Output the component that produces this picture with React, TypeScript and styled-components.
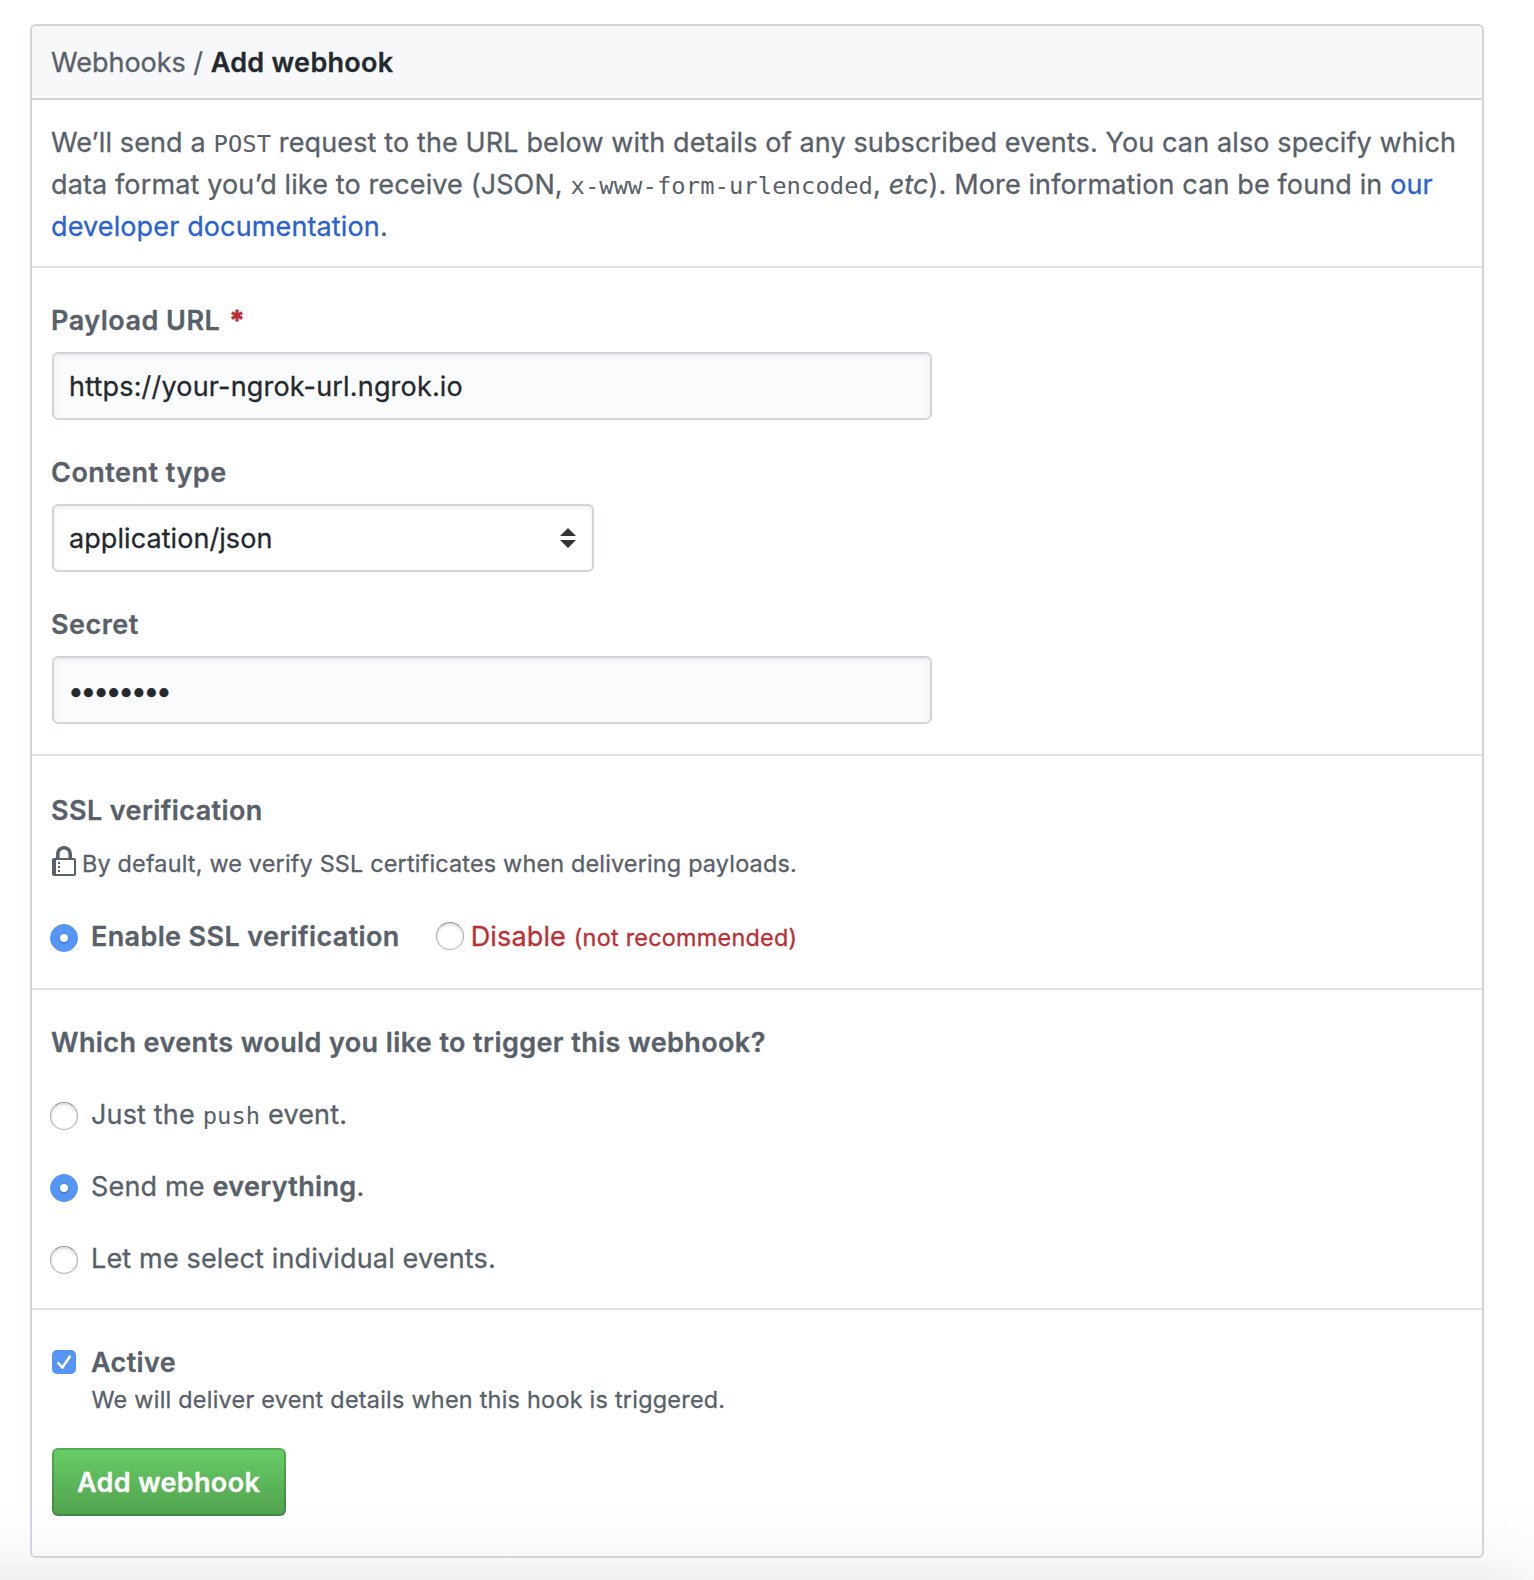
import React, { useState } from "react";
import styled, { createGlobalStyle, css } from "styled-components";

const color = {
  text: "#586069",
  dark: "#24292e",
  link: "#2a62d0",
  danger: "#bb2f34",
  border: "#d1d5da",
  divider: "#dfe2e5",
  accent: "#5596f5",
};

const GlobalStyle = createGlobalStyle`
  *, *::before, *::after { box-sizing: border-box; }
  body {
    margin: 0;
    background: #fff;
    color: ${color.text};
    font: 400 27px/42px Inter, "Liberation Sans", sans-serif;
    letter-spacing: 0.17px;
    -webkit-text-stroke: 0.3px currentColor;
  }
`;

const Page = styled.main`
  min-height: 1580px;
  padding: 24px 50px 22px 30px;
  background:
    linear-gradient(to left, rgba(255, 255, 255, 0.5), rgba(255, 255, 255, 0) 50px),
    linear-gradient(to top, rgba(0, 0, 0, 0.058), rgba(0, 0, 0, 0.026) 24px, rgba(0, 0, 0, 0.006) 58px, rgba(0, 0, 0, 0) 80px),
    #fff;
`;

const Panel = styled.form`
  border: 2px solid ${color.border};
  border-radius: 6px;
`;

const PanelHeader = styled.header`
  padding: 16px 20px 14px 19px;
  border-bottom: 2px solid ${color.border};
  border-radius: 4px 4px 0 0;
  background: #f6f8fa;
  letter-spacing: -0.02px;
`;

const PageTitle = styled.strong`
  color: ${color.dark};
  font-weight: 600;
  letter-spacing: 0.3px;
`;

const Section = styled.section<{ $top: number; $bottom: number }>`
  padding: ${(p) => p.$top}px 20px ${(p) => p.$bottom}px;

  & + & {
    border-top: 2px solid ${color.divider};
  }
`;

const Intro = styled.p`
  margin: 0 0 0 -1px;
  white-space: nowrap;
  letter-spacing: 0.125px;
`;

const Code = styled.code`
  font: 400 23.8px/0 "DejaVu Sans Mono", "Liberation Mono", monospace;
  letter-spacing: 0.08px;
  -webkit-text-stroke-width: 0;
`;

const Link = styled.a`
  color: ${color.link};
  text-decoration: none;
`;

const Fields = styled.div`
  display: grid;
  gap: 32px;
`;

const Field = styled.div`
  display: grid;
  gap: 10px;
`;

const Label = styled.label`
  margin-left: -1px;
  font-weight: 600;
  letter-spacing: 0.49px;
`;

const Required = styled.span`
  margin-left: 9.5px;
  color: ${color.danger};
  -webkit-text-stroke-width: 0.8px;
`;

const control = css`
  height: 68px;
  border: 2px solid ${color.border};
  border-radius: 6px;
  box-shadow: inset 0 2px 4px rgba(27, 31, 35, 0.075);
  color: ${color.dark};
  font: inherit;
`;

const Input = styled.input`
  ${control}
  width: 880px;
  padding: 1px 14px 0 15px;
  background: #fafbfc;
  outline: none;
  letter-spacing: 0.18px;

  &[type="password"] {
    padding-left: 14px;
    font-size: 28px;
    letter-spacing: -3.17px;
  }
`;

const Select = styled.div`
  ${control}
  display: flex;
  align-items: center;
  justify-content: space-between;
  width: 542px;
  padding: 1px 16px 0 15px;
  background: #fff;
  letter-spacing: 0.07px;

  svg {
    margin-top: -1px;
  }
`;

const Heading = styled.h2<{ $gap?: number }>`
  margin: 0 0 ${(p) => p.$gap ?? 0}px -1px;
  font-size: inherit;
  font-weight: 600;
  letter-spacing: 0.4px;
`;

const Small = styled.small`
  font-size: 23.4px;
  line-height: 0;
  letter-spacing: 0.25px;
`;

const SecureNote = styled.p`
  display: flex;
  gap: 6px;
  height: 36px;
  margin: 14px 0 34px;

  ${Small} {
    line-height: 36px;
    letter-spacing: 0.18px;
  }
`;

const Choices = styled.div<{ $row?: boolean }>`
  display: flex;
  flex-direction: ${(p) => (p.$row ? "row" : "column")};
  gap: ${(p) => (p.$row ? 38 : 30)}px;
`;

const Choice = styled.label<{ $bold?: boolean; $danger?: boolean; $gap?: number }>`
  display: flex;
  gap: ${(p) => p.$gap ?? 13}px;
  white-space: pre;
  color: ${(p) => (p.$danger ? color.danger : "inherit")};
  font-weight: ${(p) => (p.$bold ? 600 : 400)};
  letter-spacing: ${(p) => (p.$bold ? 0.36 : 0.16)}px;
`;

const Strong = styled.strong`
  font-weight: 600;
  letter-spacing: 0.33px;
`;

const Radio = styled.input.attrs({ type: "radio" })<{ $top?: number }>`
  appearance: none;
  flex: none;
  display: grid;
  place-items: center;
  width: 28px;
  height: 28px;
  margin: ${(p) => p.$top ?? 8}px 0 0 -2px;
  border: 1px solid;
  border-color: #979797 #acacac #b8b8b8;
  border-radius: 50%;
  background: #fff;
  box-shadow: inset 0 2px 3px rgba(0, 0, 0, 0.14);

  &:checked {
    border-color: ${color.accent};
    background: ${color.accent};
    box-shadow: none;
  }

  &:checked::before {
    content: "";
    width: 8px;
    height: 8px;
    border-radius: 50%;
    background: #fff;
    box-shadow: 0 1px 2px rgba(0, 40, 120, 0.45);
  }
`;

const CheckBox = styled.span`
  flex: none;
  width: 24px;
  height: 24px;
  margin-top: 8px;
  border-radius: 5px;
  background: ${color.accent};

  svg {
    display: block;
  }
`;

const HiddenInput = styled.input`
  appearance: none;
  width: 0;
  height: 0;
  margin: 0 -15px 0 0;
`;

const ActiveNote = styled.p`
  height: 32px;
  margin: 0 0 32px 39.5px;

  ${Small} {
    display: block;
    line-height: 32px;
  }
`;

const SubmitButton = styled.button`
  display: block;
  width: 234px;
  height: 68px;
  padding: 1px 1px 0 0;
  border: 2px solid rgba(27, 60, 35, 0.24);
  border-radius: 6px;
  background: linear-gradient(#68cd67, #50a14d) border-box;
  color: #fff;
  font: inherit;
  font-weight: 600;
  letter-spacing: 0.33px;
  white-space: nowrap;
`;

const LockIcon = () => (
  <svg width="24" height="32" viewBox="0 0 12 16" fill="currentColor" fillRule="evenodd">
    <path d="M4 13H3v-1h1v1zm8-6v7c0 .55-.45 1-1 1H1c-.55 0-1-.45-1-1V7c0-.55.45-1 1-1h1V4c0-2.2 1.8-4 4-4s4 1.8 4 4v2h1c.55 0 1 .45 1 1zM3.8 6h4.41V4c0-1.22-.98-2.2-2.2-2.2-1.22 0-2.2.98-2.2 2.2v2H3.8zM11 7H2v7h9V7zM4 8H3v1h1V8zm0 2H3v1h1v-1z" />
  </svg>
);

const SortIcon = () => (
  <svg width="16" height="20" viewBox="0 0 16 20" fill="#333">
    <path d="M8 0l8 8H0zM0 12h16l-8 8z" />
  </svg>
);

const CheckIcon = () => (
  <svg width="24" height="24" viewBox="0 0 24 24" fill="none" strokeLinecap="round" strokeLinejoin="round" strokeWidth="2.7">
    <path d="M6.3 14.2l4 4.5 7.4-11" stroke="rgba(20,70,170,.3)" />
    <path d="M6.3 13.2l4 4.5 7.4-11" stroke="#fff" />
  </svg>
);

export default function App() {
  const [ssl, setSsl] = useState("enable");
  const [events, setEvents] = useState("all");
  const [active, setActive] = useState(true);

  return (
    <>
      <GlobalStyle />
      <Page>
        <Panel onSubmit={(e) => e.preventDefault()}>
          <PanelHeader>
            Webhooks / <PageTitle>Add webhook</PageTitle>
          </PanelHeader>

          <Section $top={22} $bottom={18}>
            <Intro>
              We’ll send a <Code>POST</Code> request to the URL below with details of any subscribed events. You can also specify which
              <br />
              data format you’d like to receive (JSON, <Code>x-www-form-urlencoded</Code>, <em>etc</em>). More information can be found in{" "}
              <Link href="#docs">
                our
                <br />
                developer documentation
              </Link>
              .
            </Intro>
          </Section>

          <Section $top={32} $bottom={30}>
            <Fields>
              <Field>
                <Label htmlFor="url">
                  Payload URL<Required>*</Required>
                </Label>
                <Input id="url" defaultValue="https://your-ngrok-url.ngrok.io" />
              </Field>
              <Field>
                <Label>Content type</Label>
                <Select>
                  application/json
                  <SortIcon />
                </Select>
              </Field>
              <Field>
                <Label htmlFor="secret">Secret</Label>
                <Input id="secret" type="password" defaultValue="12345678" />
              </Field>
            </Fields>
          </Section>

          <Section $top={34} $bottom={30}>
            <Heading>SSL verification</Heading>
            <SecureNote>
              <LockIcon />
              <Small>By default, we verify SSL certificates when delivering payloads.</Small>
            </SecureNote>
            <Choices $row>
              <Choice $bold>
                <Radio name="ssl" checked={ssl === "enable"} onChange={() => setSsl("enable")} />
                Enable SSL verification
              </Choice>
              <Choice $danger $gap={7}>
                <Radio $top={6} name="ssl" checked={ssl === "disable"} onChange={() => setSsl("disable")} />
                <span>
                  Disable <Small>(not recommended)</Small>
                </span>
              </Choice>
            </Choices>
          </Section>

          <Section $top={32} $bottom={28}>
            <Heading $gap={30}>Which events would you like to trigger this webhook?</Heading>
            <Choices>
              <Choice>
                <Radio name="events" checked={events === "push"} onChange={() => setEvents("push")} />
                <span>
                  Just the <Code>push</Code> event.
                </span>
              </Choice>
              <Choice>
                <Radio name="events" checked={events === "all"} onChange={() => setEvents("all")} />
                <span>
                  Send me <Strong>everything</Strong>.
                </span>
              </Choice>
              <Choice>
                <Radio name="events" checked={events === "some"} onChange={() => setEvents("some")} />
                Let me select individual events.
              </Choice>
            </Choices>
          </Section>

          <Section $top={32} $bottom={40}>
            <Choice $bold $gap={15}>
              <HiddenInput type="checkbox" checked={active} onChange={() => setActive(!active)} />
              <CheckBox>{active && <CheckIcon />}</CheckBox>
              Active
            </Choice>
            <ActiveNote>
              <Small>We will deliver event details when this hook is triggered.</Small>
            </ActiveNote>
            <SubmitButton type="submit">Add webhook</SubmitButton>
          </Section>
        </Panel>
      </Page>
    </>
  );
}
